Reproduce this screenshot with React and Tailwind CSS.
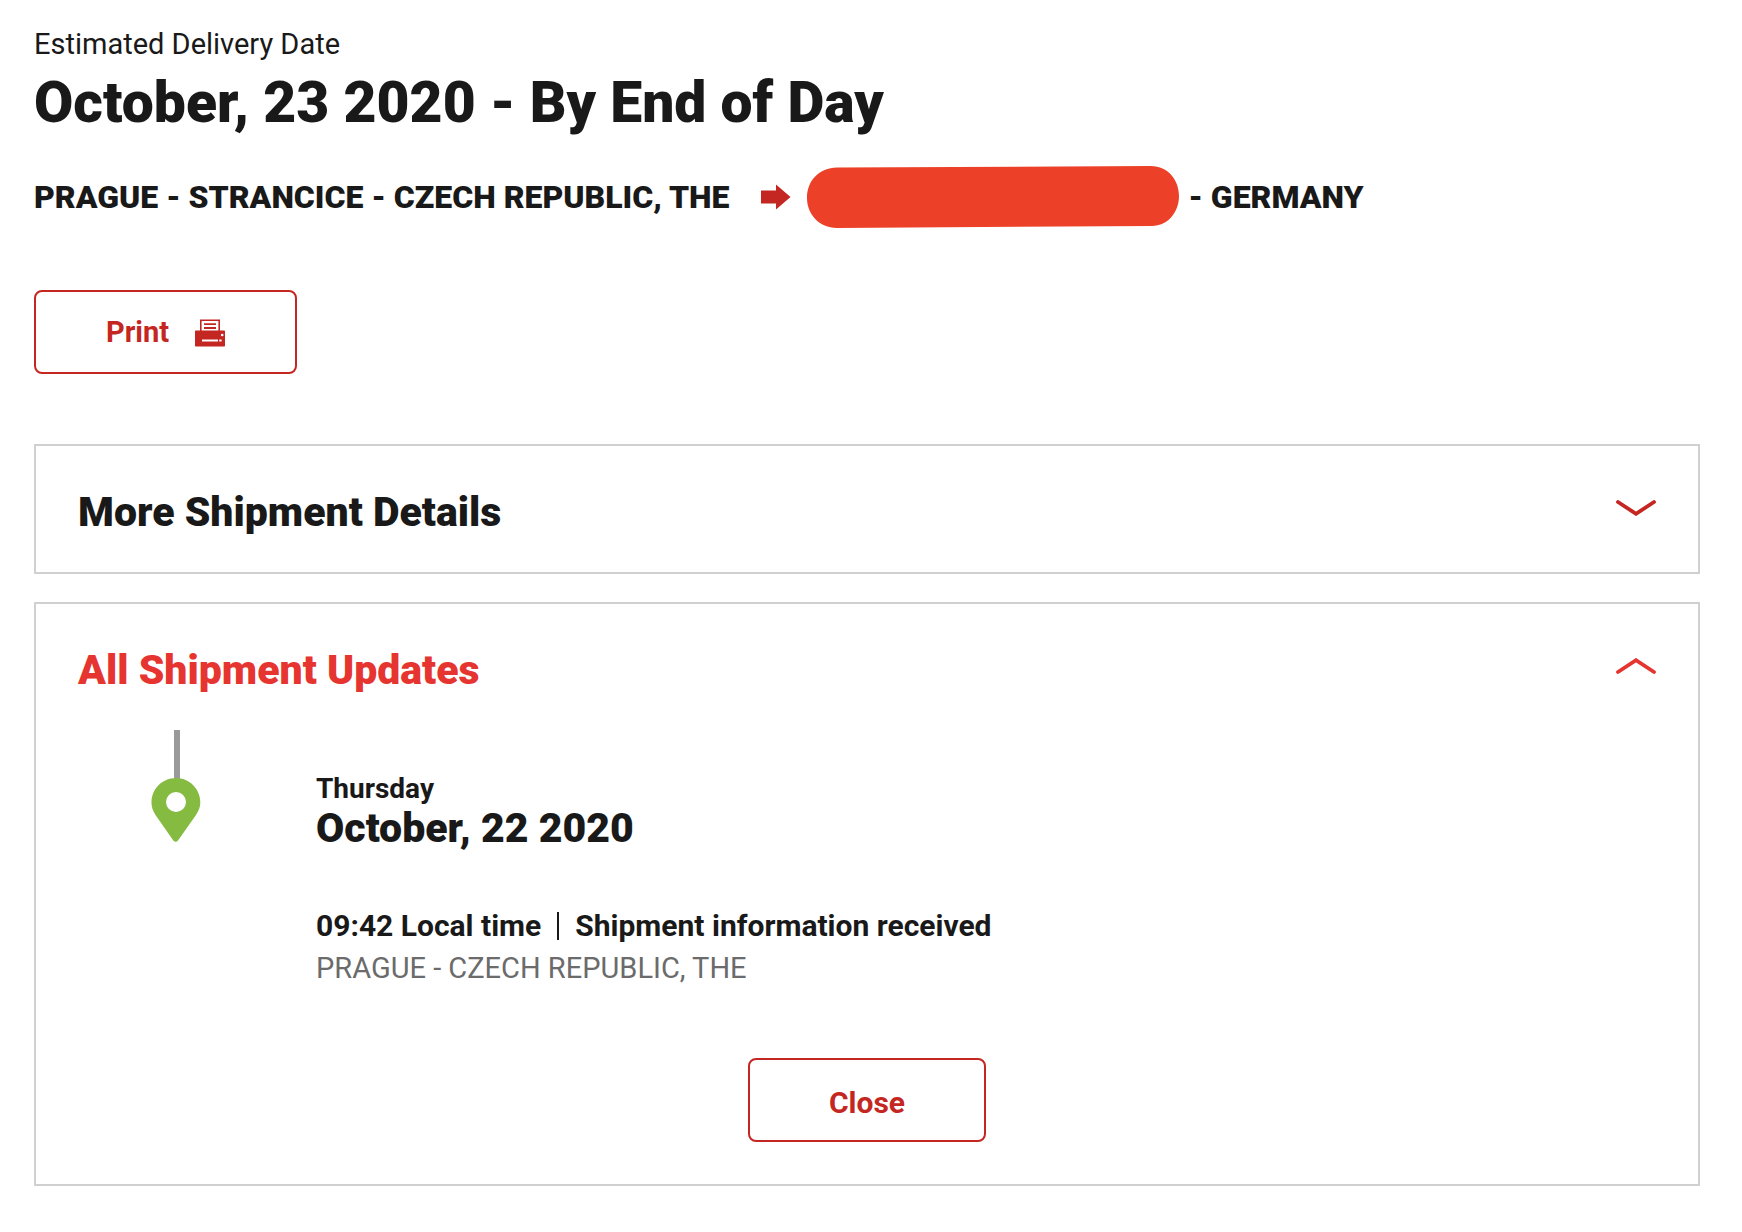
import { useState } from "react";

function ArrowIcon() {
    return (
        <svg width="30" height="26" viewBox="0 0 30 26" className="shrink-0 fill-[#c42722]" aria-hidden="true">
            <path d="M0 6.500h15V0.500l14.500 12.500-14.500 12.500v-6H0z" />
        </svg>
    );
}

// marker stroke that hides the destination city
function HiddenCity() {
    return (
        <svg width="373" height="62" viewBox="0 0 373 62" className="shrink-0 fill-[#ec4128]" role="img" aria-label="Hidden">
            <path d="M30 1.6 L344 0 C361 0 372 14 372 30 C372 46 361 60 345 60 L30 62 C12 62 0 48 0 32 C0 15 12 1.8 30 1.6z" />
        </svg>
    );
}

function PrinterIcon() {
    return (
        <svg width="30" height="28" viewBox="0 0 30 28" className="shrink-0" aria-hidden="true">
            <path d="M5.8 12V1.2h18.4V12" fill="#fff" stroke="#c42722" strokeWidth="1.6" />
            <path d="M9 5.2h12M9 9h12" stroke="#c42722" strokeWidth="1.8" />
            <rect y="11.5" width="30" height="16" rx="0.8" fill="#c42722" />
            <path d="M7 21.5h16M24.2 21.5h2.4" stroke="#fff" strokeWidth="2" />
            <circle cx="27.2" cy="16" r="1.3" fill="#fff" />
        </svg>
    );
}

function Chevron({ open }) {
    return (
        <svg width="40" height="16" viewBox="0 0 40 16" fill="none" strokeWidth="3.8" strokeLinecap="round" className="mb-2 shrink-0" aria-hidden="true">
            {open ? (
                <path d="M2 14L20 2.2L38 14" stroke="#e63530" />
            ) : (
                <path d="M2 2L20 13.8L38 2" stroke="#c42722" />
            )}
        </svg>
    );
}

function Marker() {
    return (
        <svg width="50" height="112" viewBox="0 0 50 112" className="shrink-0" aria-hidden="true">
            <path d="M23 0h6v52h-6z" fill="#999999" />
            <path
                fillRule="evenodd"
                fill="#86bb42"
                d="M25 48C11.200 48 0.500 59 0.500 72.500C0.500 77 1.700 80.500 4.500 85L22.300 110.500C23.700 112.300 25.700 112.300 27 110.500L45 85C47.800 80.500 49.300 77 49.300 72.500C49.300 59 38.500 48 25 48ZM25 62a10 10 0 1 1 0 20a10 10 0 1 1 0-20z"
            />
        </svg>
    );
}

function Panel({ title, open, onToggle, children }) {
    return (
        <section className="border-2 border-[#d0d0d0]">
            <h2>
                <button
                    type="button"
                    onClick={onToggle}
                    aria-expanded={open}
                    className="flex w-full items-center justify-between px-[42px] pt-[42px] pb-9 text-left"
                >
                    <span className={open ? "text-[41px] leading-12 font-black text-[#e63530]" : "text-[41px] leading-12 font-black"}>
                        {title}
                    </span>
                    <Chevron open={open} />
                </button>
            </h2>
            {open && children}
        </section>
    );
}

function App() {
    const [showDetails, setShowDetails] = useState(false);
    const [showUpdates, setShowUpdates] = useState(true);

    return (
        <main className="min-h-screen bg-white pt-7 pb-11 pl-[34px] pr-[42px] font-['Roboto',sans-serif] text-[#191919]">

            <p className="text-[29px] leading-8">Estimated Delivery Date</p>
            <h1 className="text-[57px] leading-[86px] font-black">
                October, 23 2020 - By End of Day
            </h1>

            <div className="mt-5 flex items-center text-[32px] font-black">
                <span>PRAGUE - STRANCICE - CZECH REPUBLIC, THE</span>
                <span className="ml-8 mr-4">
                    <ArrowIcon />
                </span>
                <HiddenCity />
                <span className="ml-2">- GERMANY</span>
            </div>

            <button
                type="button"
                onClick={() => window.print()}
                className="mt-[62px] flex h-[84px] w-[263px] items-center justify-center gap-[26px] rounded-lg border-2 border-[#c42722] pt-0.5 text-[29px] font-bold text-[#c42722]"
            >
                Print
                <PrinterIcon />
            </button>

            <div className="mt-[70px] space-y-7">
                <Panel
                    title="More Shipment Details"
                    open={showDetails}
                    onToggle={() => setShowDetails(!showDetails)}
                />

                <Panel
                    title="All Shipment Updates"
                    open={showUpdates}
                    onToggle={() => setShowUpdates(!showUpdates)}
                >
                    <div className="flex gap-[115px] pl-[115px]">
                        <Marker />
                        <div className="pt-[43px]">
                            <p className="text-[28px] leading-8 font-bold">Thursday</p>
                            <h3 className="text-[41px] leading-[46px] font-black">October, 22 2020</h3>

                            <div className="mt-[55px] flex items-center gap-4 text-[30px] leading-10 font-bold">
                                <span>09:42 Local time</span>
                                <span className="h-7 w-0.5 bg-[#191919]"></span>
                                <span>Shipment information received</span>
                            </div>
                            <p className="text-[29px] leading-11 text-[#6b6b6b]">
                                PRAGUE - CZECH REPUBLIC, THE
                            </p>
                        </div>
                    </div>

                    <button
                        type="button"
                        onClick={() => setShowUpdates(false)}
                        className="mx-auto mt-[68px] mb-[42px] block h-[84px] w-[238px] rounded-lg border-2 border-[#c42722] pt-1 text-[30px] font-bold text-[#c42722]"
                    >
                        Close
                    </button>
                </Panel>
            </div>
        </main>
    );
}

export default App;
